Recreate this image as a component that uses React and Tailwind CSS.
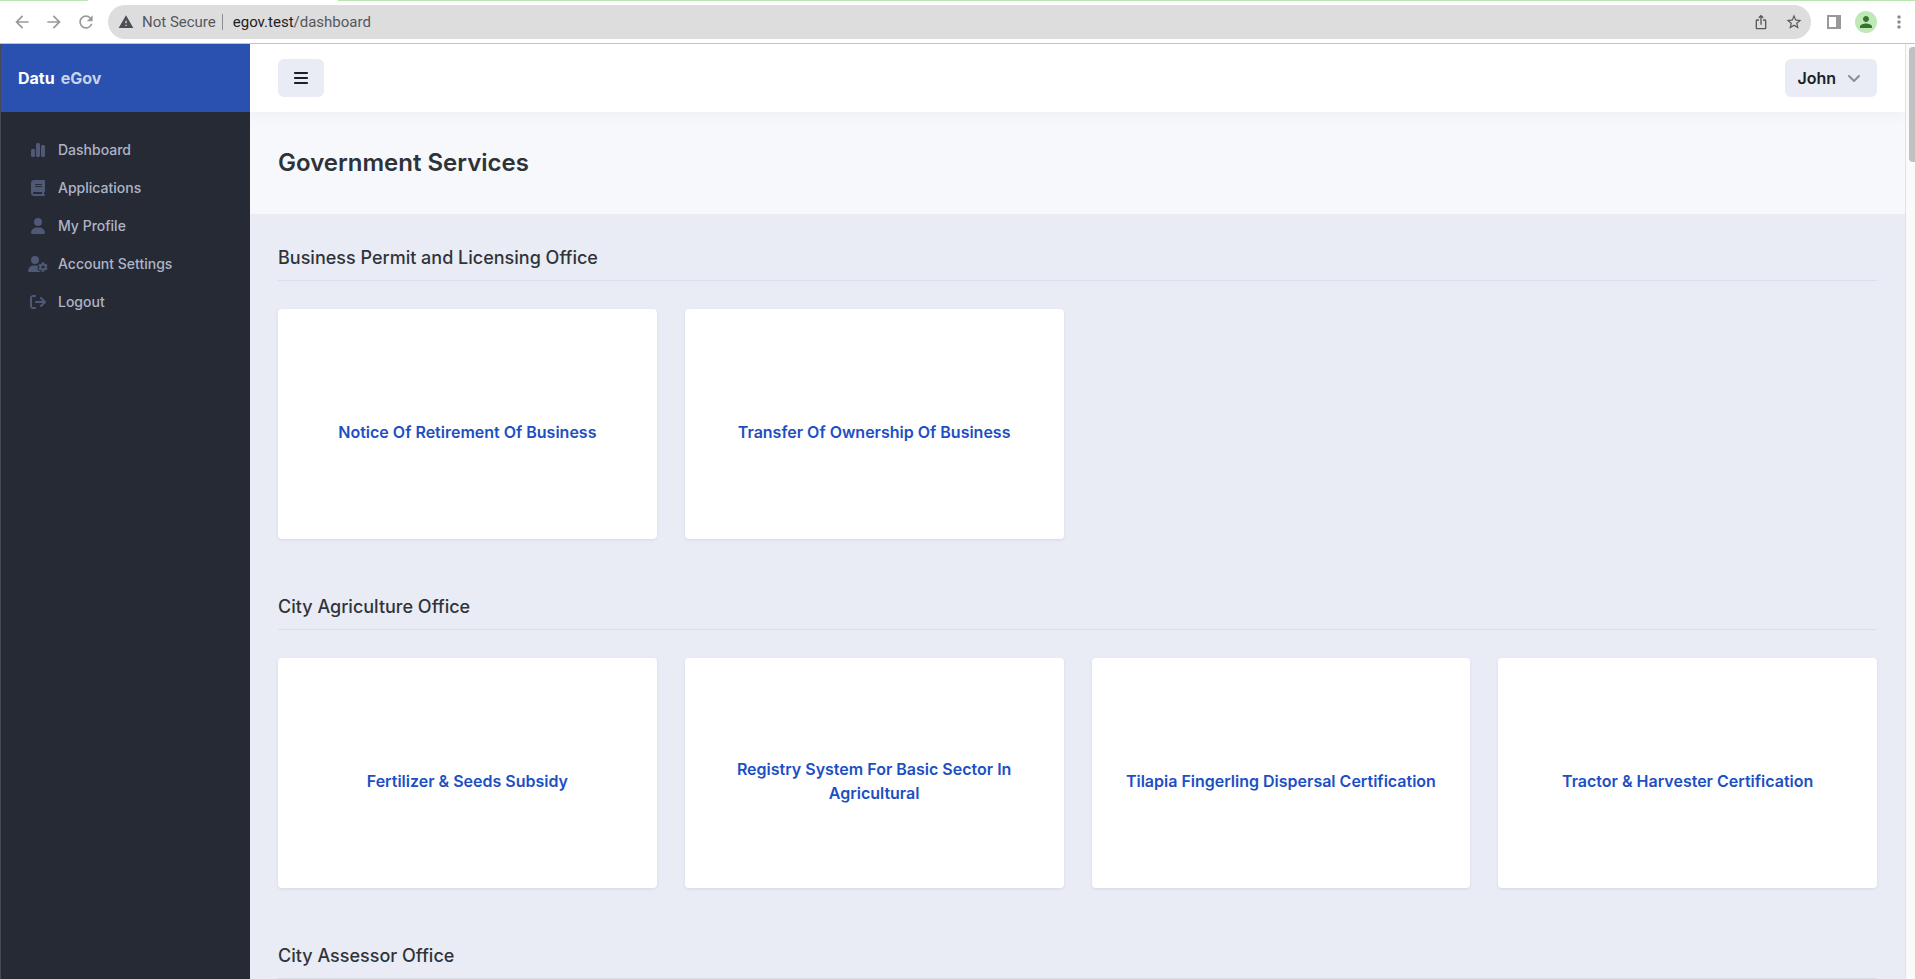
import { FaAngleDown, FaArrowRightFromBracket, FaBars, FaChartSimple, FaUser, FaUserGear } from "react-icons/fa6";
import {
  MdArrowBack,
  MdArrowForward,
  MdIosShare,
  MdMoreVert,
  MdPerson,
  MdRefresh,
  MdStarBorder,
  MdWarning,
} from "react-icons/md";

function BookIcon({ className }) {
  return (
    <svg viewBox="0 0 448 512" fill="currentColor" className={className} aria-hidden="true">
      <path d="M96 0C43 0 0 43 0 96v320c0 53 43 96 96 96h320c17.7 0 32-14.3 32-32s-14.3-32-32-32v-64c17.7 0 32-14.3 32-32V32c0-17.7-14.3-32-32-32H96zm0 384h256v64H96c-17.7 0-32-14.3-32-32s14.3-32 32-32zm32-240c0-8.8 7.2-16 16-16h192c8.8 0 16 7.2 16 16s-7.2 16-16 16H144c-8.8 0-16-7.2-16-16zm16 48h192c8.8 0 16 7.2 16 16s-7.2 16-16 16H144c-8.8 0-16-7.2-16-16s7.2-16 16-16z" />
    </svg>
  );
}

const navItems = [
  { label: "Dashboard", icon: FaChartSimple, iconClass: "h-4 w-3.5" },
  { label: "Applications", icon: BookIcon, iconClass: "h-4 w-3.5" },
  { label: "My Profile", icon: FaUser, iconClass: "h-4 w-3.5" },
  { label: "Account Settings", icon: FaUserGear, iconClass: "h-4 w-5" },
  { label: "Logout", icon: FaArrowRightFromBracket, iconClass: "size-4" },
];

const offices = [
  {
    name: "Business Permit and Licensing Office",
    services: ["Notice Of Retirement Of Business", "Transfer Of Ownership Of Business"],
  },
  {
    name: "City Agriculture Office",
    services: [
      "Fertilizer & Seeds Subsidy",
      "Registry System For Basic Sector In Agricultural",
      "Tilapia Fingerling Dispersal Certification",
      "Tractor & Harvester Certification",
    ],
  },
  { name: "City Assessor Office", services: [] },
];

function BrowserBar() {
  return (
    <div className="shrink-0 border-b border-[#c4c4c4] bg-white font-[Roboto,sans-serif]">
      <div className="flex h-px">
        <div className="w-[88px] rounded-br-sm bg-[#b9e6b0]" />
        <div className="w-[250px]" />
        <div className="flex-1 bg-[#b9e6b0]" />
      </div>
      <div className="flex h-[42px] items-center pr-1.5 pl-3">
        <button type="button" aria-label="Back" className="mr-3 text-[#9a9a9a]">
          <MdArrowBack size={20} />
        </button>
        <button type="button" aria-label="Forward" className="mr-3 text-[#9a9a9a]">
          <MdArrowForward size={20} />
        </button>
        <button type="button" aria-label="Reload" className="mr-3 text-[#9a9a9a]">
          <MdRefresh size={20} />
        </button>
        <div className="flex h-[34px] flex-1 items-center rounded-full bg-[#dddddd] pr-2 pl-2.5 text-[15px] text-[#55585c]">
          <MdWarning size={16} className="text-[#4c4f54]" />
          <span className="ml-2">Not Secure</span>
          <span className="mr-2.5 ml-1.5 h-4 w-px bg-[#8e8e8e]" />
          <span className="flex-1">
            <span className="text-[#1f2023]">egov.test</span>/dashboard
          </span>
          <button type="button" aria-label="Share" className="mr-4">
            <MdIosShare size={16} />
          </button>
          <button type="button" aria-label="Bookmark">
            <MdStarBorder size={18} />
          </button>
        </div>
        <button type="button" aria-label="Side panel" className="ml-4 text-[#999999]">
          <svg width="14" height="14" viewBox="0 0 14 14" fill="currentColor">
            <path fillRule="evenodd" d="M0 0h14v14H0zM2 2v10h7V2z" />
          </svg>
        </button>
        <button
          type="button"
          aria-label="Account"
          className="ml-3.5 flex size-[22px] items-center justify-center rounded-full bg-[#bfe8b6] text-[#35752a]"
        >
          <MdPerson size={18} />
        </button>
        <button type="button" aria-label="Menu" className="ml-3 text-[#8a8a8a]">
          <MdMoreVert size={20} />
        </button>
      </div>
    </div>
  );
}

function Sidebar() {
  return (
    <aside className="w-[250px] shrink-0 border-l border-[#454a55] bg-[#262a35]">
      <div className="flex h-[68px] items-center bg-[#2a51b0] px-[17px]">
        <a href="#" className="flex gap-1.5 font-bold text-white">
          <span>Datu</span>
          <span className="text-white/75">eGov</span>
        </a>
      </div>
      <nav className="px-[17px] pt-[19px]">
        <ul>
          {navItems.map(({ label, icon: Icon, iconClass }) => (
            <li key={label}>
              <a href="#" className="flex h-[38px] items-center px-2.5 text-sm font-medium text-[#aeb4c6]">
                <span className="mr-2.5 flex w-5 justify-center text-[#4f5975]">
                  <Icon className={iconClass} />
                </span>
                {label}
              </a>
            </li>
          ))}
        </ul>
      </nav>
    </aside>
  );
}

function Office({ name, services }) {
  return (
    <section className="mb-[52px]">
      <h2 className="mb-7 border-b border-[#dbdfed] pb-1.5 text-lg leading-8 font-medium text-[#30343a]">{name}</h2>
      <div className="grid grid-cols-4 gap-7">
        {services.map((service) => (
          <a
            key={service}
            href="#"
            className="flex h-[230px] items-center justify-center rounded bg-white px-7 pt-4 text-center font-semibold text-[#1d4fc4] shadow-[0_1px_3px_#d3d8ea]"
          >
            {service}
          </a>
        ))}
      </div>
    </section>
  );
}

export default function App() {
  return (
    <div className="flex h-screen flex-col overflow-hidden font-[Inter,sans-serif] text-base">
      <BrowserBar />
      <div className="flex min-h-0 flex-1">
        <Sidebar />
        <div className="flex min-w-0 flex-1 flex-col overflow-hidden bg-[#e9ecf5]">
          <header className="z-10 flex h-[68px] shrink-0 items-center justify-between bg-white px-7 shadow-[0_4px_10px_#eef0f5]">
            <button
              type="button"
              aria-label="Toggle sidebar"
              className="flex h-[38px] w-[46px] items-center justify-center rounded-md bg-[#e9ecf5] text-[#1b1e24]"
            >
              <FaBars size={16} />
            </button>
            <button
              type="button"
              className="flex h-[38px] items-center rounded-md bg-[#e9ecf5] pr-[15px] pl-3 font-semibold text-[#1d2125]"
            >
              John
              <FaAngleDown size={16} className="ml-2.5 text-[#8b8e95]" />
            </button>
          </header>
          <div className="flex h-[102px] shrink-0 items-center bg-[#f7f8fc] px-7">
            <h1 className="text-2xl font-semibold text-[#2d3338]">Government Services</h1>
          </div>
          <main className="px-7 pt-7">
            {offices.map((office) => (
              <Office key={office.name} {...office} />
            ))}
          </main>
        </div>
        <div className="flex w-[10px] shrink-0 justify-end border-l border-[#e3e3e6] bg-[#fafafa] pt-[3px]">
          <div className="h-[115px] w-1.5 rounded-l bg-[#c1c1c1]" />
        </div>
      </div>
    </div>
  );
}
